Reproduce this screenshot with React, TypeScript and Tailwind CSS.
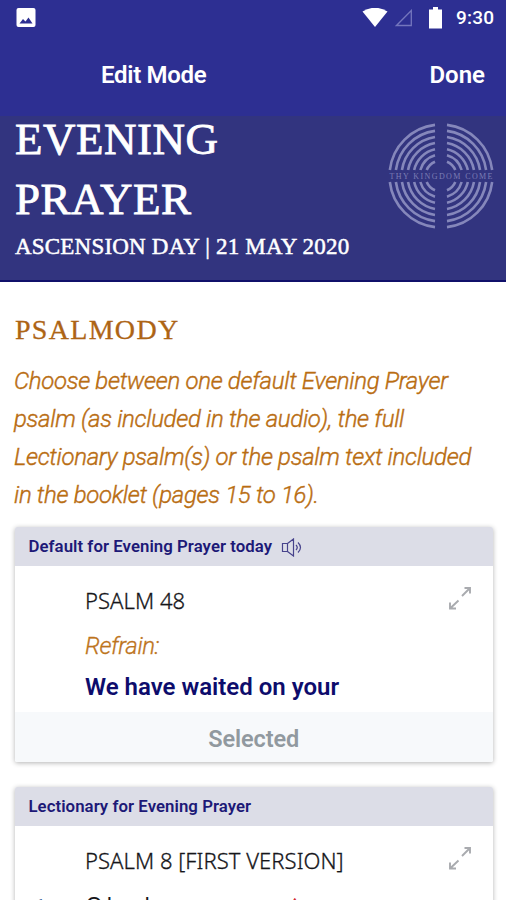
import type { ReactNode } from "react";

const rings = [51.5, 45.5, 39.5, 33.5, 27.5, 21.5, 15.5];

function StatusBar() {
  return (
    <div className="flex h-9 items-center text-white">
      <svg className="ml-4 h-5 w-5" viewBox="0 0 20 20" aria-hidden="true">
        <rect x="0.5" y="0" width="19" height="19" rx="2" fill="currentColor" />
        <path d="M3.5 15.5 7 11l2.5 2.5L12.500 9.500 16.500 15.500Z" fill="#2d2f92" />
      </svg>
      <svg className="ml-[326px] h-5 w-[26px]" viewBox="0 0 26 20" aria-hidden="true">
        <path d="M0.500 3.500Q13-4 25.500 3.500L13 19Z" fill="currentColor" />
      </svg>
      <svg className="ml-[7px] h-[18px] w-[18px]" viewBox="0 0 18 18" aria-hidden="true">
        <path d="M16.300 1.500V16.500H1.500Z" fill="none" stroke="#7476bd" strokeWidth="1.300" />
      </svg>
      <svg className="ml-[16px] h-[22px] w-[13px]" viewBox="0 0 13 22" aria-hidden="true">
        <path d="M4 0h5v2.500h4V21.500H0V2.500h4Z" fill="currentColor" />
      </svg>
      <span className="ml-[14px] text-[19px] font-medium leading-6 tracking-[0.2px]">9:30</span>
    </div>
  );
}

function KingdomLogo() {
  return (
    <svg className="h-[106px] w-[106px]" viewBox="-53 -53 106 106" aria-hidden="true">
      <g fill="none" stroke="#8587bb" strokeWidth="2.600">
        {rings.map((r) => {
          const v = Math.sqrt(r * r - 36);
          return (
            <path
              key={r}
              d={`M${-v} -6A${r} ${r} 0 0 1 -6 ${-v}M6 ${-v}A${r} ${r} 0 0 1 ${v} -6M${v} 6A${r} ${r} 0 0 1 6 ${v}M-6 ${v}A${r} ${r} 0 0 1 ${-v} 6`}
            />
          );
        })}
      </g>
      <text
        x="0"
        y="2.500"
        textAnchor="middle"
        textLength="103"
        fontSize="8"
        fill="#7c7eb5"
        fontFamily="Liberation Serif, serif"
      >
        THY KINGDOM COME
      </text>
    </svg>
  );
}

function SpeakerIcon() {
  return (
    <svg
      className="ml-[9px] h-5 w-[22px] text-[#47438c]"
      viewBox="0 0 22 20"
      fill="none"
      stroke="currentColor"
      strokeWidth="1.200"
      aria-hidden="true"
    >
      <path d="M1.500 6.500h5v8h-5ZM6.500 6.500l6-4.500v17L6.500 14.500M15 8q2.500 2.500 0 5M17 5.500q5 5 0 10" />
    </svg>
  );
}

function ExpandIcon() {
  return (
    <svg
      className="-mt-px ml-px h-6 w-6 shrink-0 text-[#a9abaf]"
      viewBox="0 0 24 24"
      fill="none"
      stroke="currentColor"
      strokeWidth="1.900"
      aria-hidden="true"
    >
      <path d="M14 10 22 2M16.500 2H22v5.500M10.500 14.500 2 22.500M2 16.500v6h6" />
    </svg>
  );
}

type PsalmCardProps = {
  label: string;
  title: ReactNode;
  audio?: boolean;
  children: ReactNode;
};

function PsalmCard({ label, title, audio, children }: PsalmCardProps) {
  return (
    <section className="ml-[14.500px] w-[478.500px] overflow-hidden rounded-[2px] bg-white shadow-[0_1px_5px_rgba(0,0,0,0.3)]">
      <header className="flex h-[39px] items-center bg-[#dcdde7] pl-[14px] text-[#1d1977]">
        <h3 className="-mt-px whitespace-nowrap text-[16.800px] font-semibold leading-5 tracking-[0.050px]">
          {label}
        </h3>
        {audio && <SpeakerIcon />}
      </header>
      <div className="flex justify-between pl-[70.500px] pr-[21px] pt-[21px] text-[#16161a]">
        <h4 className="-mt-[2px] mb-[2px] whitespace-nowrap font-['Noto_Sans'] text-[22px] font-light leading-[30px] tracking-[0.050px] [-webkit-text-stroke:0.3px_currentColor]">
          {title}
        </h4>
        <ExpandIcon />
      </div>
      {children}
    </section>
  );
}

export default function App() {
  return (
    <div className="h-[900px] w-[506px] overflow-hidden bg-white font-[Roboto,sans-serif]">
      <div className="h-[116px] bg-[#2d2f92]">
        <StatusBar />
        <div className="flex h-[78px] items-center justify-between pl-[101px] pr-[21px] text-white">
          <h1 className="text-[24px] font-semibold leading-8 tracking-[-0.3px]">Edit Mode</h1>
          <button className="text-[24px] font-semibold leading-8">Done</button>
        </div>
      </div>

      <div className="flex h-[166px] justify-between border-b-2 border-[#10106a] bg-[#32347f] pl-[15px] pr-[12px] font-['Liberation_Serif',serif] text-white">
        <div className="whitespace-nowrap">
          <h2 className="-mt-[7px] text-[45px] leading-[60px] tracking-[0.500px] [-webkit-text-stroke:0.8px_currentColor]">
            EVENING
            <br />
            PRAYER
          </h2>
          <p className="mt-[4px] text-[23px] leading-[28px] tracking-[0.200px] [-webkit-text-stroke:0.500px_currentColor]">
            ASCENSION DAY | 21 MAY 2020
          </p>
        </div>
        <div className="-ml-4 mt-[7px]">
          <KingdomLogo />
        </div>
      </div>

      <main>
        <h2 className="mt-[31px] pl-[15px] font-['Liberation_Serif',serif] text-[28px] leading-[34px] tracking-[1.300px] text-[#ad6415] [-webkit-text-stroke:0.3px_currentColor]">
          PSALMODY
        </h2>
        <p className="mt-[15px] whitespace-nowrap pl-[14px] text-[24px] font-light italic leading-[38px] tracking-[-0.320px] text-[#b96d12] [-webkit-text-stroke:0.400px_currentColor]">
          Choose between one default Evening Prayer
          <br />
          psalm (as included in the audio), the full
          <br />
          Lectionary psalm(s) or the psalm text included
          <br />
          in the booklet (pages 15 to 16).
        </p>

        <div className="mt-[13px] flex flex-col gap-[25px]">
          <PsalmCard label="Default for Evening Prayer today" title="PSALM 48" audio>
            <p className="mt-[13px] pl-[70.500px] text-[24px] font-light italic leading-[32px] tracking-[-0.400px] text-[#bd741c] [-webkit-text-stroke:0.300px_currentColor]">
              Refrain:
            </p>
            <p className="mt-[9px] pl-[70.500px] text-[24px] font-semibold leading-[32px] text-[#0d0c6c]">
              We have waited on your
            </p>
            <button className="mt-[9px] block h-[50px] w-full bg-[#f7f9fb] pt-[4px] text-[23.500px] font-semibold leading-[46px] tracking-[-0.100px] text-[#91999f]">
              Selected
            </button>
          </PsalmCard>
          <PsalmCard label="Lectionary for Evening Prayer" title="PSALM 8 [FIRST VERSION]">
            <div className="mt-[11px] flex h-[60px] items-start whitespace-nowrap leading-[32px]">
              <span className="w-[71px] pl-[21px] pt-[2px] text-[16px] font-bold text-[#1d4f91]">1</span>
              <p className="font-['Noto_Sans'] text-[22px] tracking-[-1.100px] text-[#16161a]">
                O Lord our governor,
                <span className="relative -top-[2px] ml-[11px] text-[#d22630]">♦</span>
              </p>
            </div>
          </PsalmCard>
        </div>
      </main>
    </div>
  );
}
